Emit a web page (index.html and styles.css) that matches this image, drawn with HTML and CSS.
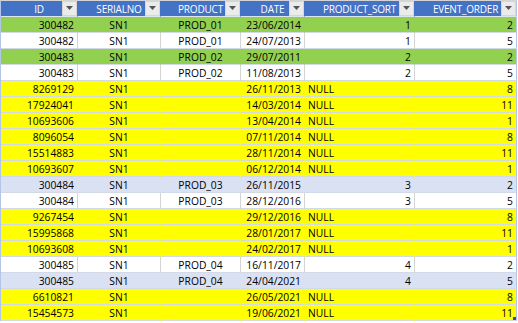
FILE: index.html
```html
<!DOCTYPE html>
<html>
<head>
<meta charset="utf-8">
<link rel="stylesheet" href="styles.css">
</head>
<body>
<table class="sheet">
  <thead>
    <tr>
      <th class="c-id">ID<span class="filter"><svg width="7" height="4" viewBox="0 0 7 4"><path d="M0 0h7L3.5 4z"/></svg></span></th>
      <th class="c-sn">SERIALNO<span class="filter"><svg width="7" height="4" viewBox="0 0 7 4"><path d="M0 0h7L3.5 4z"/></svg></span></th>
      <th class="c-pr">PRODUCT<span class="filter"><svg width="7" height="4" viewBox="0 0 7 4"><path d="M0 0h7L3.5 4z"/></svg></span></th>
      <th class="c-dt">DATE<span class="filter"><svg width="7" height="4" viewBox="0 0 7 4"><path d="M0 0h7L3.5 4z"/></svg></span></th>
      <th class="c-ps">PRODUCT_SORT<span class="filter"><svg width="7" height="4" viewBox="0 0 7 4"><path d="M0 0h7L3.5 4z"/></svg></span></th>
      <th class="c-eo">EVENT_ORDER<span class="filter"><svg width="7" height="4" viewBox="0 0 7 4"><path d="M0 0h7L3.5 4z"/></svg></span></th>
    </tr>
  </thead>
  <tbody>
    <tr class="green"><td class="num">300482</td><td class="mid">SN1</td><td class="mid">PROD_01</td><td class="num">23/06/2014</td><td class="num">1</td><td class="num">2</td></tr>
    <tr class="white"><td class="num">300482</td><td class="mid">SN1</td><td class="mid">PROD_01</td><td class="num">24/07/2013</td><td class="num">1</td><td class="num">5</td></tr>
    <tr class="green"><td class="num">300483</td><td class="mid">SN1</td><td class="mid">PROD_02</td><td class="num">29/07/2011</td><td class="num">2</td><td class="num">2</td></tr>
    <tr class="white"><td class="num">300483</td><td class="mid">SN1</td><td class="mid">PROD_02</td><td class="num">11/08/2013</td><td class="num">2</td><td class="num">5</td></tr>
    <tr class="yellow"><td class="num">8269129</td><td class="mid">SN1</td><td class="mid"></td><td class="num">26/11/2013</td><td class="txt">NULL</td><td class="num">8</td></tr>
    <tr class="yellow"><td class="num">17924041</td><td class="mid">SN1</td><td class="mid"></td><td class="num">14/03/2014</td><td class="txt">NULL</td><td class="num">11</td></tr>
    <tr class="yellow"><td class="num">10693606</td><td class="mid">SN1</td><td class="mid"></td><td class="num">13/04/2014</td><td class="txt">NULL</td><td class="num">1</td></tr>
    <tr class="yellow"><td class="num">8096054</td><td class="mid">SN1</td><td class="mid"></td><td class="num">07/11/2014</td><td class="txt">NULL</td><td class="num">8</td></tr>
    <tr class="yellow"><td class="num">15514883</td><td class="mid">SN1</td><td class="mid"></td><td class="num">28/11/2014</td><td class="txt">NULL</td><td class="num">11</td></tr>
    <tr class="yellow"><td class="num">10693607</td><td class="mid">SN1</td><td class="mid"></td><td class="num">06/12/2014</td><td class="txt">NULL</td><td class="num">1</td></tr>
    <tr class="band"><td class="num">300484</td><td class="mid">SN1</td><td class="mid">PROD_03</td><td class="num">26/11/2015</td><td class="num">3</td><td class="num">2</td></tr>
    <tr class="white"><td class="num">300484</td><td class="mid">SN1</td><td class="mid">PROD_03</td><td class="num">28/12/2016</td><td class="num">3</td><td class="num">5</td></tr>
    <tr class="yellow"><td class="num">9267454</td><td class="mid">SN1</td><td class="mid"></td><td class="num">29/12/2016</td><td class="txt">NULL</td><td class="num">8</td></tr>
    <tr class="yellow"><td class="num">15995868</td><td class="mid">SN1</td><td class="mid"></td><td class="num">28/01/2017</td><td class="txt">NULL</td><td class="num">11</td></tr>
    <tr class="yellow"><td class="num">10693608</td><td class="mid">SN1</td><td class="mid"></td><td class="num">24/02/2017</td><td class="txt">NULL</td><td class="num">1</td></tr>
    <tr class="white"><td class="num">300485</td><td class="mid">SN1</td><td class="mid">PROD_04</td><td class="num">16/11/2017</td><td class="num">4</td><td class="num">2</td></tr>
    <tr class="band"><td class="num">300485</td><td class="mid">SN1</td><td class="mid">PROD_04</td><td class="num">24/04/2021</td><td class="num">4</td><td class="num">5</td></tr>
    <tr class="yellow"><td class="num">6610821</td><td class="mid">SN1</td><td class="mid"></td><td class="num">26/05/2021</td><td class="txt">NULL</td><td class="num">8</td></tr>
    <tr class="yellow"><td class="num">15454573</td><td class="mid">SN1</td><td class="mid"></td><td class="num">19/06/2021</td><td class="txt">NULL</td><td class="num last">11<span class="handle"></span></td></tr>
  </tbody>
</table>
</body>
</html>
```
FILE: styles.css
```css
html, body {
  margin: 0;
  padding: 0;
  background: #ffffff;
}

.sheet {
  border-collapse: separate;
  border-spacing: 0;
  table-layout: fixed;
  width: 517px;
  border-top: 1px solid #d4d4d4;
  border-left: 1px solid #b4c6e7;
  font-family: "Open Sans", "Liberation Sans", sans-serif;
  font-size: 10.3px;
  color: #000000;
}

.sheet th,
.sheet td {
  box-sizing: border-box;
  height: 16px;
  padding: 1px 3px 0 3px;
  line-height: 14px;
  white-space: nowrap;
  overflow: visible;
  border-right: 1px solid transparent;
  border-bottom: 1px solid #d3d9e6;
}

.sheet th {
  position: relative;
  background: #4472c4;
  color: #ffffff;
  font-weight: 400;
  font-size: 10px;
  letter-spacing: -0.2px;
  text-align: center;
  border-right-color: #4472c4;
  border-bottom-color: #dfe5f0;
}

.sheet th:last-child,
.sheet td:last-child {
  border-right-color: #b4c6e7;
}

.c-id { width: 77px; }
.c-sn { width: 83px; }
.c-pr { width: 80px; }
.c-dt { width: 64px; }
.c-ps { width: 110px; }
.c-eo { width: 102px; }

.filter {
  position: absolute;
  right: 0;
  top: 0;
  width: 15px;
  height: 15px;
  box-sizing: border-box;
  background: #ebebeb;
  border: 1px solid #d6d6d6;
  display: flex;
  align-items: center;
  justify-content: center;
}

.filter svg {
  display: block;
  fill: #555555;
  margin-top: -1px;
}

.num { text-align: right; }
.mid { text-align: center; }
.txt { text-align: left; }

.green { background: #92d050; }
.yellow { background: #ffff00; }
.band { background: #d9e1f2; }
.white { background: #ffffff; }

.white td {
  border-right-color: #d4d4d4;
}

.last {
  position: relative;
}

.handle {
  position: absolute;
  right: 0;
  bottom: 0;
  width: 3px;
  height: 3px;
  background: #2f4f8f;
}
```
